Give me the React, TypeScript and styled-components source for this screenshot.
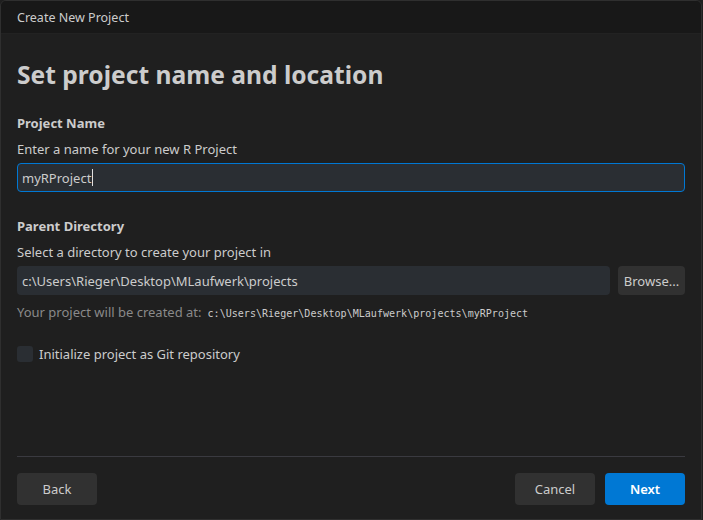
import styled, { createGlobalStyle } from "styled-components";

const GlobalStyle = createGlobalStyle`
  html, body {
    margin: 0;
    padding: 0;
    background: #1f1f1f;
  }
  body {
    font-family: "Segoe UI", "Noto Sans", "Open Sans", sans-serif;
    color: #cccccc;
  }
`;

const Dialog = styled.div`
  box-sizing: border-box;
  width: 702px;
  height: 520px;
  border: 1px solid #2f2f2f;
  border-radius: 6px 6px 0 0;
  background: #1f1f1f;
  display: flex;
  flex-direction: column;
  overflow: hidden;
`;

const TitleBar = styled.div`
  height: 32px;
  flex: none;
  background: #181818;
  border-bottom: 1px solid #222;
  display: flex;
  align-items: center;
  padding-left: 16px;
  font-size: 12.5px;
  color: #cccccc;
`;

const Body = styled.div`
  flex: 1;
  display: flex;
  flex-direction: column;
  padding: 25px 16px 14px 16px;
`;

const Heading = styled.h1`
  margin: 0 0 23px 0;
  font-size: 24.6px;
  font-weight: 700;
  line-height: 32px;
  color: #cccccc;
`;

const Section = styled.div<{ $after: number }>`
  display: flex;
  flex-direction: column;
  margin-bottom: ${(p) => p.$after}px;
`;

const Label = styled.div`
  font-size: 13px;
  font-weight: 700;
  line-height: 18px;
  color: #cccccc;
  margin-bottom: 8px;
`;

const Hint = styled.div`
  font-size: 13px;
  line-height: 18px;
  color: #cccccc;
  margin-bottom: 5px;
`;

const Row = styled.div`
  display: flex;
  gap: 8px;
`;

const Field = styled.div<{ $focused?: boolean }>`
  box-sizing: border-box;
  flex: 1 1 auto;
  height: 29px;
  display: flex;
  align-items: center;
  padding: 0 4px;
  background: #2a2e33;
  border: 1px solid ${(p) => (p.$focused ? "#0078d4" : "transparent")};
  border-radius: 4px;
  font-size: 13px;
  color: #cccccc;
`;

const Caret = styled.span`
  display: inline-block;
  width: 1px;
  height: 17px;
  background: #e0e0e0;
  margin-left: 1px;
`;

const SmallButton = styled.div`
  box-sizing: border-box;
  height: 29px;
  width: 67px;
  display: flex;
  align-items: center;
  justify-content: center;
  background: #313131;
  border-radius: 4px;
  font-size: 13px;
  color: #cccccc;
`;

const Note = styled.div`
  margin-top: 8px;
  font-size: 13px;
  line-height: 18px;
  color: #8a8a8a;
  display: flex;
  align-items: baseline;
  gap: 6px;
`;

const Mono = styled.span`
  font-family: "DejaVu Sans Mono", "Liberation Mono", monospace;
  font-size: 10.05px;
  color: #cccccc;
`;

const CheckRow = styled.div`
  display: flex;
  align-items: center;
  gap: 6px;
  font-size: 13px;
  color: #cccccc;
`;

const Box = styled.div`
  width: 16px;
  height: 16px;
  border-radius: 3px;
  background: #2a2e33;
`;

const Spacer = styled.div`
  flex: 1;
`;

const Divider = styled.div`
  height: 1px;
  background: #3a3a40;
  margin-bottom: 16px;
`;

const Footer = styled.div`
  display: flex;
  align-items: center;
  gap: 10px;
`;

const Button = styled.div<{ $primary?: boolean }>`
  box-sizing: border-box;
  width: 80px;
  height: 32px;
  display: flex;
  align-items: center;
  justify-content: center;
  border-radius: 4px;
  font-size: 13px;
  font-weight: ${(p) => (p.$primary ? 600 : 400)};
  background: ${(p) => (p.$primary ? "#0078d4" : "#313131")};
  color: ${(p) => (p.$primary ? "#ffffff" : "#cccccc")};
`;

export default function App() {
  return (
    <>
      <GlobalStyle />
      <Dialog>
        <TitleBar>Create New Project</TitleBar>
        <Body>
          <Heading>Set project name and location</Heading>
          <Section $after={25}>
            <Label>Project Name</Label>
            <Hint>Enter a name for your new R Project</Hint>
            <Row>
              <Field $focused>
                myRProject
                <Caret />
              </Field>
            </Row>
          </Section>
          <Section $after={22}>
            <Label>Parent Directory</Label>
            <Hint>Select a directory to create your project in</Hint>
            <Row>
              <Field>c:\Users\Rieger\Desktop\MLaufwerk\projects</Field>
              <SmallButton>Browse...</SmallButton>
            </Row>
            <Note>
              Your project will be created at:
              <Mono>c:\Users\Rieger\Desktop\MLaufwerk\projects\myRProject</Mono>
            </Note>
          </Section>
          <CheckRow>
            <Box />
            Initialize project as Git repository
          </CheckRow>
          <Spacer />
          <Divider />
          <Footer>
            <Button>Back</Button>
            <Spacer />
            <Button>Cancel</Button>
            <Button $primary>Next</Button>
          </Footer>
        </Body>
      </Dialog>
    </>
  );
}
